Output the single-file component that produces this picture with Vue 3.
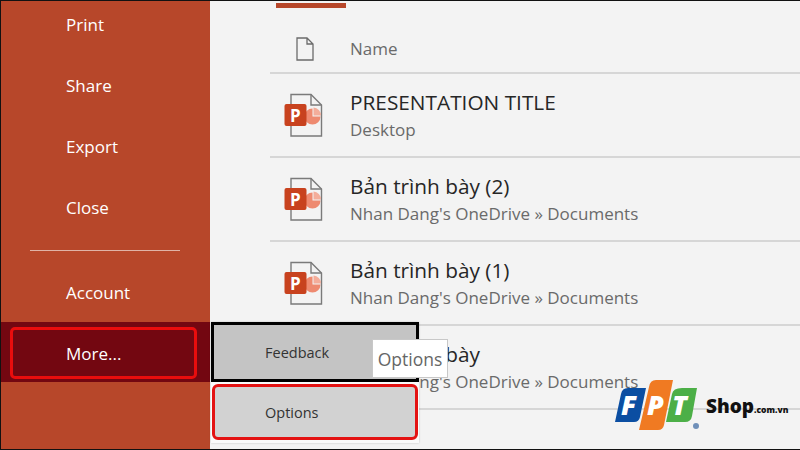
<script setup>
const navTop = ['Print', 'Share', 'Export', 'Close']
const files = [
  { title: 'PRESENTATION TITLE', sub: 'Desktop' },
  { title: 'Bản trình bày (2)', sub: "Nhan Dang's OneDrive » Documents" },
  { title: 'Bản trình bày (1)', sub: "Nhan Dang's OneDrive » Documents" },
  { title: 'Bản trình bày', sub: "Nhan Dang's OneDrive » Documents" },
]
</script>

<template>
  <div class="app">
    <aside class="side">
      <div class="nav">
        <div v-for="n in navTop" :key="n" class="nav-item">{{ n }}</div>
      </div>
      <div class="divider"></div>
      <div class="nav-account">Account</div>
      <div class="nav-more"><span class="more-box">More...</span></div>
    </aside>
    <main class="main">
      <div class="tab"></div>
      <div class="head">
        <svg class="head-icon" width="18" height="24" viewBox="0 0 18 24">
          <path d="M1 1h10l6 6v16H1z M11 1v6h6" fill="none" stroke="#6b6b6b" stroke-width="1.3" />
        </svg>
        <span class="head-name">Name</span>
      </div>
      <div v-for="f in files" :key="f.title" class="row">
        <svg class="ppt" width="40" height="44" viewBox="0 0 40 44">
          <path d="M7 1.5h20l10.500 10.500v31h-30.500z" fill="#f3f3f3" stroke="#7a7a7a" stroke-width="1.400" />
          <path d="M27 1.500v10.500h10.500" fill="none" stroke="#7a7a7a" stroke-width="1.400" />
          <path d="M28.500 15.500a8 8 0 1 0 8 8h-8z" fill="#ee8a70" />
          <path d="M29.500 14.500a8 8 0 0 1 7.500 8h-7.500z" fill="#f4ad9a" />
          <rect x="0.500" y="11" width="22" height="22" rx="2" fill="#c8421e" />
          <text x="6" y="28.500" class="ppt-p">P</text>
        </svg>
        <div class="row-text">
          <div class="row-title">{{ f.title }}</div>
          <div class="row-sub">{{ f.sub }}</div>
        </div>
      </div>
    </main>

    <div class="menu">
      <div class="menu-item feedback">Feedback</div>
      <div class="menu-item options">Options</div>
    </div>
    <div class="tooltip">Options</div>

    <div class="logo">
      <svg class="logo-mark" width="96" height="56" viewBox="0 0 96 56">
        <path d="M16 10H34L28 39Q27 44 22 44H3L9 16Q10 10 16 10z" fill="#0b4ea2" />
        <path d="M44 2H61L52 47Q51 52 46 52H27L37 9Q38 2 44 2z" fill="#f07a22" />
        <path d="M70 10H85L80 38Q79 44 73 44H54L60 16Q61 10 70 10z" fill="#4caf47" />
        <text x="9" y="37" class="logo-letter">F</text>
        <text x="35" y="37" class="logo-letter">P</text>
        <text x="60" y="37" class="logo-letter">T</text>
        <circle cx="84" cy="48" r="3" fill="#6f8fb8" />
      </svg>
      <span class="shop">Shop<small>.com.vn</small></span>
    </div>
  </div>
</template>

<style>
html, body { margin: 0; padding: 0; }
</style>

<style scoped>
.app {
  position: relative;
  width: 800px;
  height: 450px;
  overflow: hidden;
  display: flex;
  background: #f3f3f3;
  font-family: "Open Sans", "Noto Sans", sans-serif;
  box-sizing: border-box;
  border: 1px solid #111;
  border-width: 1px 0 1px 1px;
}
.side {
  width: 209px;
  flex: none;
  background: #b7472a;
  color: #fff;
  font-size: 17px;
  display: flex;
  flex-direction: column;
}
.nav { margin-top: -7px; }
.nav-item {
  height: 61px;
  display: flex;
  align-items: center;
  padding-left: 65px;
}
.divider {
  height: 1px;
  margin: 12px 30px 0 29px;
  background: #e0b3a6;
}
.nav-account {
  height: 71px;
  box-sizing: border-box;
  padding-top: 11px;
  display: flex;
  align-items: center;
  padding-left: 65px;
}
.nav-more {
  height: 60px;
  background: #730711;
  padding: 5px 13px 3px 9px;
  box-sizing: border-box;
}
.more-box {
  display: flex;
  align-items: center;
  height: 100%;
  box-sizing: border-box;
  border: 3px solid #e90d0d;
  border-radius: 5px;
  padding-left: 53px;
}
.main {
  flex: 1;
  padding-left: 60px;
  display: flex;
  flex-direction: column;
}
.tab {
  width: 70px;
  height: 5px;
  margin: 2px 0 0 6px;
  background: #b7472a;
}
.head {
  height: 66px;
  box-sizing: border-box;
  display: flex;
  align-items: center;
  border-bottom: 2px solid #d6d6d6;
  padding-left: 26px;
  padding-top: 16px;
}
.head-icon { margin-top: 2px; }
.head-name {
  margin-left: 36px;
  color: #6a6a6a;
  font-size: 17px;
}
.row {
  height: 84px;
  flex: none;
  box-sizing: border-box;
  border-bottom: 2px solid #d6d6d6;
  display: flex;
  align-items: center;
  position: relative;
}
.ppt { margin-left: 14px; flex: none; }
.ppt-p {
  font: bold 17px "Open Sans", sans-serif;
  fill: #fff;
}
.row-text { margin-left: 26px; padding-bottom: 1px; }
.row-title {
  font-size: 20.800px;
  line-height: 28px;
  color: #262626;
}
.row-sub {
  font-size: 17px;
  line-height: 25px;
  margin-top: 1px;
  color: #6a6a6a;
}
.menu {
  position: absolute;
  left: 210px;
  top: 321px;
  width: 208px;
  height: 121px;
  background: #fafafa;
  box-shadow: 0 0 2px rgba(0, 0, 0, .2);
  font-size: 14.500px;
  color: #333;
}
.menu-item {
  box-sizing: border-box;
  display: flex;
  align-items: center;
  padding-left: 51px;
}
.feedback {
  height: 60px;
  background: #c4c4c4;
  border: 3px solid #000;
}
.options {
  height: 56px;
  margin: 2px 1px 0;
  background: #d2d2d2;
  border: 3px solid #e41212;
  border-radius: 6px;
  padding-left: 50px;
}
.tooltip {
  position: absolute;
  left: 371px;
  top: 338px;
  width: 76px;
  height: 39px;
  box-sizing: border-box;
  background: #fff;
  border: 1px solid #c8c8c8;
  color: #666;
  font-size: 17.500px;
  display: flex;
  align-items: center;
  justify-content: center;
}
.logo {
  position: absolute;
  left: 611px;
  top: 377px;
  width: 189px;
  height: 60px;
}
.logo-mark { display: block; }
.logo-letter {
  font: italic 800 27px "Open Sans", sans-serif;
  fill: #fff;
}
.shop {
  position: absolute;
  left: 94px;
  top: 16px;
  font: 800 19px/24px "Open Sans", sans-serif;
  color: #111;
  white-space: nowrap;
}
.shop small { font-size: 8.500px; }
</style>
